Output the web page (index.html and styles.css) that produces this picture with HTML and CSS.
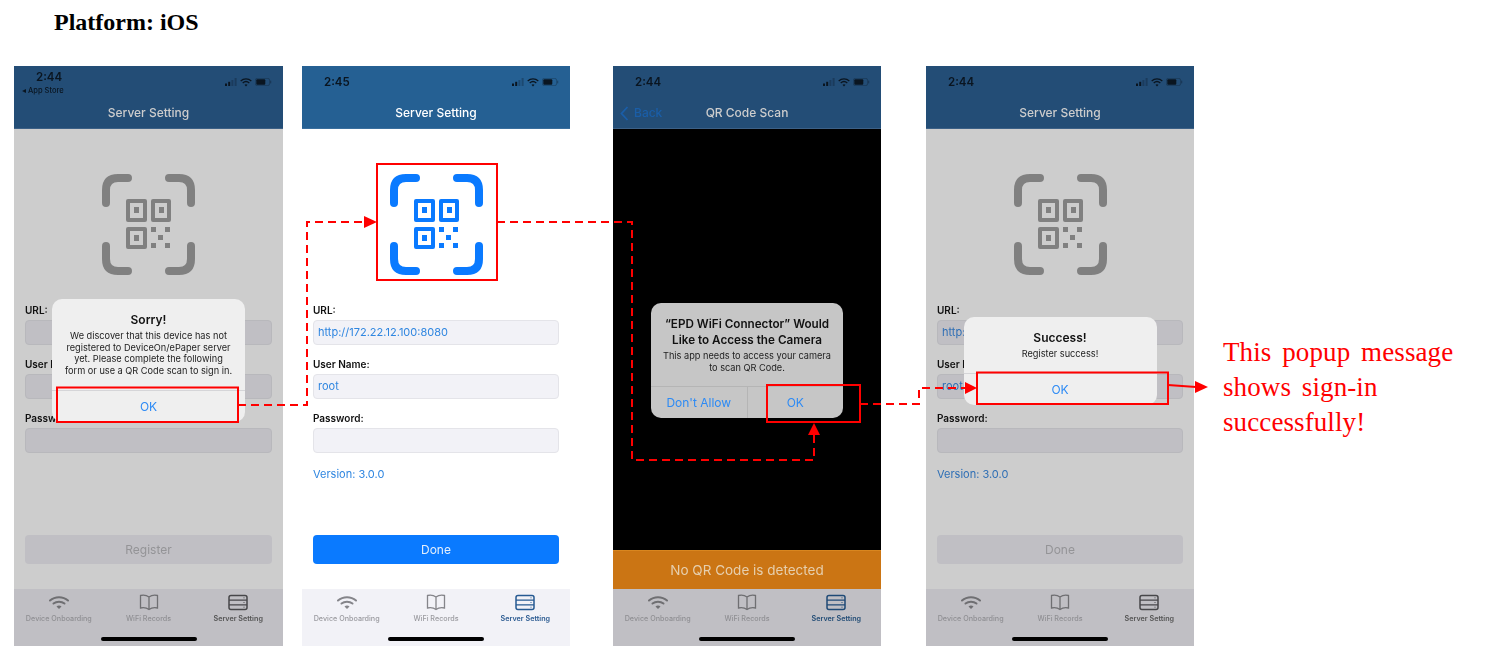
FILE: index.html
```html
<!DOCTYPE html>
<html lang="en">
<head>
    <meta charset="UTF-8">
    <title>Platform: iOS</title>
    <link rel="stylesheet" href="styles.css">
</head>
<body>
    <svg class="defs" width="0" height="0">
        <symbol id="qr" viewBox="0 0 93 101">
            <g fill="none" stroke="currentColor" stroke-width="8" stroke-linecap="round">
                <path d="M4 29V16Q4 4 16 4H26"/>
                <path d="M67 4H77Q89 4 89 16V29"/>
                <path d="M4 72V85Q4 97 16 97H26"/>
                <path d="M67 97H77Q89 97 89 85V72"/>
            </g>
            <g fill="none" stroke="currentColor" stroke-width="4" stroke-linejoin="round">
                <rect x="26" y="27" width="17" height="19"/>
                <rect x="51" y="27" width="16" height="19"/>
                <rect x="26" y="55" width="17" height="18"/>
            </g>
            <g fill="currentColor">
                <rect x="32" y="33" width="5" height="6"/>
                <rect x="57" y="33" width="5" height="6"/>
                <rect x="32" y="61" width="5" height="6"/>
                <rect x="49" y="53" width="5" height="5"/>
                <rect x="63" y="53" width="5" height="5"/>
                <rect x="56" y="61" width="5" height="5"/>
                <rect x="49" y="69" width="5" height="5"/>
                <rect x="63" y="69" width="5" height="5"/>
            </g>
        </symbol>
        <symbol id="wifi" viewBox="0 0 20 15">
            <g fill="none" stroke="currentColor" stroke-width="2" stroke-linecap="round">
                <path d="M1 5.500C6 1 14 1 19 5.500"/>
                <path d="M4.500 8.500C7.500 6 12.500 6 15.500 8.500"/>
            </g>
            <path d="M7.500 11.500C9 10.300 11 10.300 12.500 11.500L10 14Z" fill="currentColor"/>
        </symbol>
        <symbol id="book" viewBox="0 0 20 17">
            <path d="M10 3C8 1.500 4 1 1.500 1.500V14C4 13.500 8 14 10 15.500C12 14 16 13.500 18.500 14V1.500C16 1 12 1.500 10 3V15.500" fill="none" stroke="currentColor" stroke-width="1.300"/>
        </symbol>
        <symbol id="server" viewBox="0 0 20 16">
            <rect x="1" y="1" width="18" height="14" rx="2" fill="none" stroke="currentColor" stroke-width="1.500"/>
            <path d="M1 5.700H19M1 10.300H19" stroke="currentColor" stroke-width="1.300"/>
            <path d="M16 3V3.800M16 7.700V8.500M16 12.300V13.100" stroke="currentColor" stroke-width="1.200"/>
        </symbol>
        <symbol id="signal" viewBox="0 0 12 8">
            <rect x="0" y="5.500" width="2" height="2.500" fill="currentColor"/>
            <rect x="3.200" y="3.800" width="2" height="4.200" fill="currentColor"/>
            <rect x="6.400" y="2" width="2" height="6" fill="currentColor" opacity=".3"/>
            <rect x="9.600" y="0" width="2" height="8" fill="currentColor" opacity=".3"/>
        </symbol>
        <symbol id="airwaves" viewBox="0 0 12 9">
            <g fill="none" stroke="currentColor" stroke-width="1.300">
                <path d="M.7 3C3.700 .2 8.300 .2 11.300 3"/>
                <path d="M2.700 5C4.600 3.300 7.400 3.300 9.300 5"/>
            </g>
            <path d="M4.500 6.700C5.400 6 6.600 6 7.500 6.700L6 8.500Z" fill="currentColor"/>
        </symbol>
        <symbol id="battery" viewBox="0 0 17 8">
            <rect x=".4" y=".4" width="14.200" height="7.200" rx="1.800" fill="none" stroke="currentColor" stroke-width=".7" opacity=".4"/>
            <rect x="1.300" y="1.300" width="9" height="5.400" rx="1" fill="currentColor"/>
            <rect x="15.200" y="2.700" width="1" height="2.600" fill="currentColor" opacity=".4"/>
        </symbol>
    </svg>

    <h1 class="page-title">Platform: iOS</h1>

    <div class="slide">
        <!-- first launch, not registered -->
        <div class="phone dim">
            <div class="phone-head">
                <div class="status">
                    <div class="clock clock-back">
                        <span>2:44</span>
                        <small>◂ App Store</small>
                    </div>
                    <div class="status-icons">
                        <svg class="ic-signal"><use href="#signal"/></svg>
                        <svg class="ic-air"><use href="#airwaves"/></svg>
                        <svg class="ic-batt"><use href="#battery"/></svg>
                    </div>
                </div>
                <div class="nav">Server Setting</div>
            </div>
            <div class="form">
                <svg class="qr"><use href="#qr"/></svg>
                <label class="first">URL:</label>
                <div class="field"></div>
                <label>User Name:</label>
                <div class="field"></div>
                <label>Password:</label>
                <div class="field"></div>
                <button class="main-btn">Register</button>
            </div>
            <div class="tabs">
                <div class="tab"><svg class="ic-wifi"><use href="#wifi"/></svg>Device Onboarding</div>
                <div class="tab"><svg class="ic-book"><use href="#book"/></svg>WiFi Records</div>
                <div class="tab on"><svg class="ic-server"><use href="#server"/></svg>Server Setting</div>
            </div>
            <div class="home-bar"></div>
            <div class="alert alert-sorry">
                <div class="alert-text">
                    <h3>Sorry!</h3>
                    <p>We discover that this device has not<br>registered to DeviceOn/ePaper server<br>yet. Please complete the following<br>form or use a QR Code scan to sign in.</p>
                </div>
                <div class="alert-btns"><span>OK</span></div>
            </div>
        </div>

        <!-- form filled in -->
        <div class="phone">
            <div class="phone-head">
                <div class="status">
                    <div class="clock">2:45</div>
                    <div class="status-icons">
                        <svg class="ic-signal"><use href="#signal"/></svg>
                        <svg class="ic-air"><use href="#airwaves"/></svg>
                        <svg class="ic-batt"><use href="#battery"/></svg>
                    </div>
                </div>
                <div class="nav">Server Setting</div>
            </div>
            <div class="form">
                <svg class="qr"><use href="#qr"/></svg>
                <label class="first">URL:</label>
                <div class="field">http://172.22.12.100:8080</div>
                <label>User Name:</label>
                <div class="field">root</div>
                <label>Password:</label>
                <div class="field"></div>
                <div class="version">Version: 3.0.0</div>
                <button class="main-btn">Done</button>
            </div>
            <div class="tabs">
                <div class="tab"><svg class="ic-wifi"><use href="#wifi"/></svg>Device Onboarding</div>
                <div class="tab"><svg class="ic-book"><use href="#book"/></svg>WiFi Records</div>
                <div class="tab on"><svg class="ic-server"><use href="#server"/></svg>Server Setting</div>
            </div>
            <div class="home-bar"></div>
        </div>

        <!-- camera permission -->
        <div class="phone scan">
            <div class="phone-head">
                <div class="status">
                    <div class="clock">2:44</div>
                    <div class="status-icons">
                        <svg class="ic-signal"><use href="#signal"/></svg>
                        <svg class="ic-air"><use href="#airwaves"/></svg>
                        <svg class="ic-batt"><use href="#battery"/></svg>
                    </div>
                </div>
                <div class="nav">
                    <div class="back">
                        <svg class="chevron" viewBox="0 0 9 15"><path d="M7.500 1L1.500 7.500L7.500 14" fill="none" stroke="currentColor" stroke-width="1.800"/></svg>
                        Back
                    </div>
                    QR Code Scan
                </div>
            </div>
            <div class="camera"></div>
            <div class="scan-msg">No QR Code is detected</div>
            <div class="tabs">
                <div class="tab"><svg class="ic-wifi"><use href="#wifi"/></svg>Device Onboarding</div>
                <div class="tab"><svg class="ic-book"><use href="#book"/></svg>WiFi Records</div>
                <div class="tab on"><svg class="ic-server"><use href="#server"/></svg>Server Setting</div>
            </div>
            <div class="home-bar"></div>
            <div class="alert alert-camera">
                <div class="alert-text">
                    <h3>“EPD WiFi Connector” Would<br>Like to Access the Camera</h3>
                    <p>This app needs to access your camera<br>to scan QR Code.</p>
                </div>
                <div class="alert-btns"><span>Don't Allow</span><span>OK</span></div>
            </div>
        </div>

        <!-- registered -->
        <div class="phone dim">
            <div class="phone-head">
                <div class="status">
                    <div class="clock">2:44</div>
                    <div class="status-icons">
                        <svg class="ic-signal"><use href="#signal"/></svg>
                        <svg class="ic-air"><use href="#airwaves"/></svg>
                        <svg class="ic-batt"><use href="#battery"/></svg>
                    </div>
                </div>
                <div class="nav">Server Setting</div>
            </div>
            <div class="form">
                <svg class="qr"><use href="#qr"/></svg>
                <label class="first">URL:</label>
                <div class="field">http://172.22.12.100:8080</div>
                <label>User Name:</label>
                <div class="field">root</div>
                <label>Password:</label>
                <div class="field"></div>
                <div class="version">Version: 3.0.0</div>
                <button class="main-btn">Done</button>
            </div>
            <div class="tabs">
                <div class="tab"><svg class="ic-wifi"><use href="#wifi"/></svg>Device Onboarding</div>
                <div class="tab"><svg class="ic-book"><use href="#book"/></svg>WiFi Records</div>
                <div class="tab on"><svg class="ic-server"><use href="#server"/></svg>Server Setting</div>
            </div>
            <div class="home-bar"></div>
            <div class="alert alert-success">
                <div class="alert-text">
                    <h3>Success!</h3>
                    <p>Register success!</p>
                </div>
                <div class="alert-btns"><span>OK</span></div>
            </div>
        </div>

        <p class="note">This popup message shows sign-in successfully!</p>
    </div>

    <!-- red callouts drawn over the screenshots -->
    <svg class="callouts" viewBox="0 0 1490 661">
        <g fill="none" stroke="#f00" stroke-width="2">
            <rect x="57" y="387.500" width="181" height="34.500"/>
            <rect x="377" y="164" width="120" height="116"/>
            <rect x="767" y="385" width="93" height="37"/>
            <rect x="977" y="372.500" width="191" height="31.500"/>
            <g stroke-dasharray="8 5">
                <path d="M238 405H307V222H365"/>
                <path d="M497 222H632V460H814V435"/>
                <path d="M860 404H919V388H965"/>
            </g>
            <path d="M1168 385L1196 387"/>
        </g>
        <g fill="#f00">
            <path d="M377 222L364 216V228Z"/>
            <path d="M814 423L808 435H820Z"/>
            <path d="M977 388L965 382V394Z"/>
            <path d="M1208 387L1195 381V393Z"/>
        </g>
    </svg>
</body>
</html>
```

FILE: styles.css
```css
* {
    box-sizing: border-box;
}

body {
    position: relative;
    width: 1490px;
    height: 661px;
    margin: 0;
    overflow: hidden;
    background: #fff;
    font-family: Inter, "Noto Sans", sans-serif;
}

.defs {
    position: absolute;
}

.page-title {
    height: 66px;
    margin: 0;
    padding: 9px 0 0 54px;
    font: bold 24px/27px "Liberation Serif", serif;
    color: #000;
}

.slide {
    display: flex;
    align-items: flex-start;
    padding-left: 14px;
}

.phone {
    position: relative;
    display: flex;
    flex-direction: column;
    flex: none;
    width: 268px;
    height: 580px;
    margin-right: 43px;
    background: #fff;
    color: #000;
    filter: blur(.35px);
}

.phone:nth-child(1) {
    width: 269px;
    margin-right: 19px;
}

.phone:nth-child(3) {
    margin-right: 45px;
}

.phone:nth-child(4) {
    margin-right: 29px;
}

.phone-head {
    flex: none;
    height: 63px;
    background: #256093;
    border-bottom: 1px solid #3a6f9e;
}

.status {
    display: flex;
    align-items: center;
    justify-content: space-between;
    height: 32px;
    padding: 0 11px 0 22px;
}

.clock {
    font-size: 11.500px;
    font-weight: 600;
    color: #0a1520;
}

.clock-back {
    display: flex;
    flex-direction: column;
    margin-top: 1px;
}

.clock-back span {
    line-height: 14px;
}

.clock-back small {
    margin: 2px 0 0 -14px;
    font-size: 7.500px;
    font-weight: 500;
    line-height: 10px;
    white-space: nowrap;
}

.status-icons {
    display: flex;
    align-items: center;
    gap: 3px;
    color: #0a1520;
}

.ic-signal {
    width: 12px;
    height: 8px;
}

.ic-air {
    width: 12px;
    height: 9px;
}

.ic-batt {
    width: 17px;
    height: 8px;
}

.nav {
    position: relative;
    height: 30px;
    font-size: 12px;
    font-weight: 500;
    line-height: 30px;
    text-align: center;
    color: #fff;
}

.back {
    position: absolute;
    top: 0;
    left: 7px;
    display: flex;
    align-items: center;
    gap: 5px;
    color: #1a5ea8;
}

.chevron {
    width: 9px;
    height: 15px;
}

.form {
    display: flex;
    flex-direction: column;
    flex: 1;
    padding: 0 11px 25px;
}

.qr {
    flex: none;
    align-self: center;
    width: 93px;
    height: 101px;
    margin-top: 45px;
    color: #0a7aff;
}

.form label {
    height: 14px;
    margin-top: 12px;
    font-size: 10px;
    font-weight: 600;
    line-height: 14px;
    color: #111;
}

.form label.first {
    margin-top: 28px;
}

.field {
    height: 25px;
    margin-top: 3px;
    padding-left: 4px;
    border: 1px solid #e4e4e9;
    border-radius: 4px;
    background: #f2f2f7;
    font-size: 11px;
    line-height: 23px;
    color: #2f86e0;
}

.version {
    margin-top: 14px;
    font-size: 11px;
    line-height: 14px;
    color: #2f86e0;
}

.main-btn {
    height: 29px;
    margin-top: auto;
    border: 0;
    border-radius: 4px;
    background: #0a7aff;
    font: 12px Inter, sans-serif;
    color: #e4effc;
}

.tabs {
    display: flex;
    flex: none;
    height: 36px;
    padding-top: 5px;
    background: #f2f2f7;
}

.tab {
    display: flex;
    flex: 1;
    flex-direction: column;
    align-items: center;
    height: 31px;
    font-size: 7.200px;
    font-weight: 500;
    color: #9a9a9f;
    white-space: nowrap;
}

.tab svg {
    flex: none;
    height: 17px;
    margin-bottom: 3px;
    color: #85858a;
}

.ic-wifi {
    width: 20px;
}

.ic-book {
    width: 20px;
}

.ic-server {
    width: 20px;
}

.tab.on {
    font-weight: 600;
    color: #2d5c92;
}

.tab.on svg {
    color: #265a92;
}

.home-bar {
    flex: none;
    height: 21px;
    background: #f2f2f7;
    padding-top: 12px;
}

.home-bar::after {
    content: "";
    display: block;
    width: 96px;
    height: 4px;
    margin: 0 auto;
    border-radius: 2px;
    background: #000;
}

/* gray sheet while a popup is up */
.dim {
    background: #cdcdcd;
}

.dim .phone-head,
.scan .phone-head {
    background: #234d76;
    border-color: #3c6086;
}

.dim .nav,
.scan .nav {
    color: #cdcdcd;
}

.dim .qr {
    color: #808080;
}

.dim .field {
    background: #c0bfc4;
    border-color: #b8b8bc;
    color: #2f6fb5;
}

.dim .version {
    color: #2f6fb5;
}

.dim .main-btn {
    background: #c0bfc4;
    color: #949497;
}

.dim .tabs,
.dim .home-bar,
.scan .tabs,
.scan .home-bar {
    background: #c0bfc4;
}

.dim .tab,
.scan .tab {
    color: #8f8f93;
}

.dim .tab svg,
.scan .tab svg {
    color: #6f6f72;
}

.dim .tab.on {
    color: #555;
}

.dim .tab.on svg {
    color: #47474a;
}

.scan .tab.on {
    color: #234d76;
}

.scan .tab.on svg {
    color: #1f4a76;
}

.camera {
    flex: 1;
    background: #000;
}

.scan-msg {
    flex: none;
    height: 39px;
    border-top: 1px solid #d9861f;
    background: #cb7514;
    font-size: 13.500px;
    line-height: 38px;
    text-align: center;
    color: #e6cfae;
}

.alert {
    position: absolute;
    left: 0;
    right: 0;
    display: flex;
    flex-direction: column;
    width: 193px;
    margin: 0 auto;
    border-radius: 10px;
    background: #efefef;
    text-align: center;
}

.alert-sorry {
    top: 233px;
    height: 123px;
}

.alert-camera {
    top: 237px;
    width: 192px;
    height: 115px;
    background: #c6c6c6;
}

.alert-success {
    top: 251px;
    height: 88px;
}

.alert-text {
    flex: 1;
    padding-top: 13px;
}

.alert h3 {
    margin: 0;
    font-size: 12px;
    font-weight: 600;
    line-height: 16px;
    color: #111;
}

.alert p {
    margin: 2px 0 0;
    font-size: 9.200px;
    line-height: 11.500px;
    color: #222;
}

.alert-camera h3 {
    font-size: 11.700px;
}

.alert-btns {
    display: flex;
    flex: none;
    height: 32px;
    border-top: 1px solid #d5d5d8;
    font-size: 12px;
    line-height: 31px;
    color: #2c8af5;
}

.alert-btns span {
    flex: 1;
}

.alert-btns span + span {
    border-left: 1px solid #b5b5b5;
}

.alert-camera .alert-btns {
    border-color: #b5b5b5;
}

.note {
    width: 250px;
    margin: 269px 0 0;
    font: 27px/35px "Liberation Serif", serif;
    letter-spacing: .1px;
    word-spacing: 4px;
    color: #f00;
}

.callouts {
    position: absolute;
    top: 0;
    left: 0;
    width: 1490px;
    height: 661px;
}
```
